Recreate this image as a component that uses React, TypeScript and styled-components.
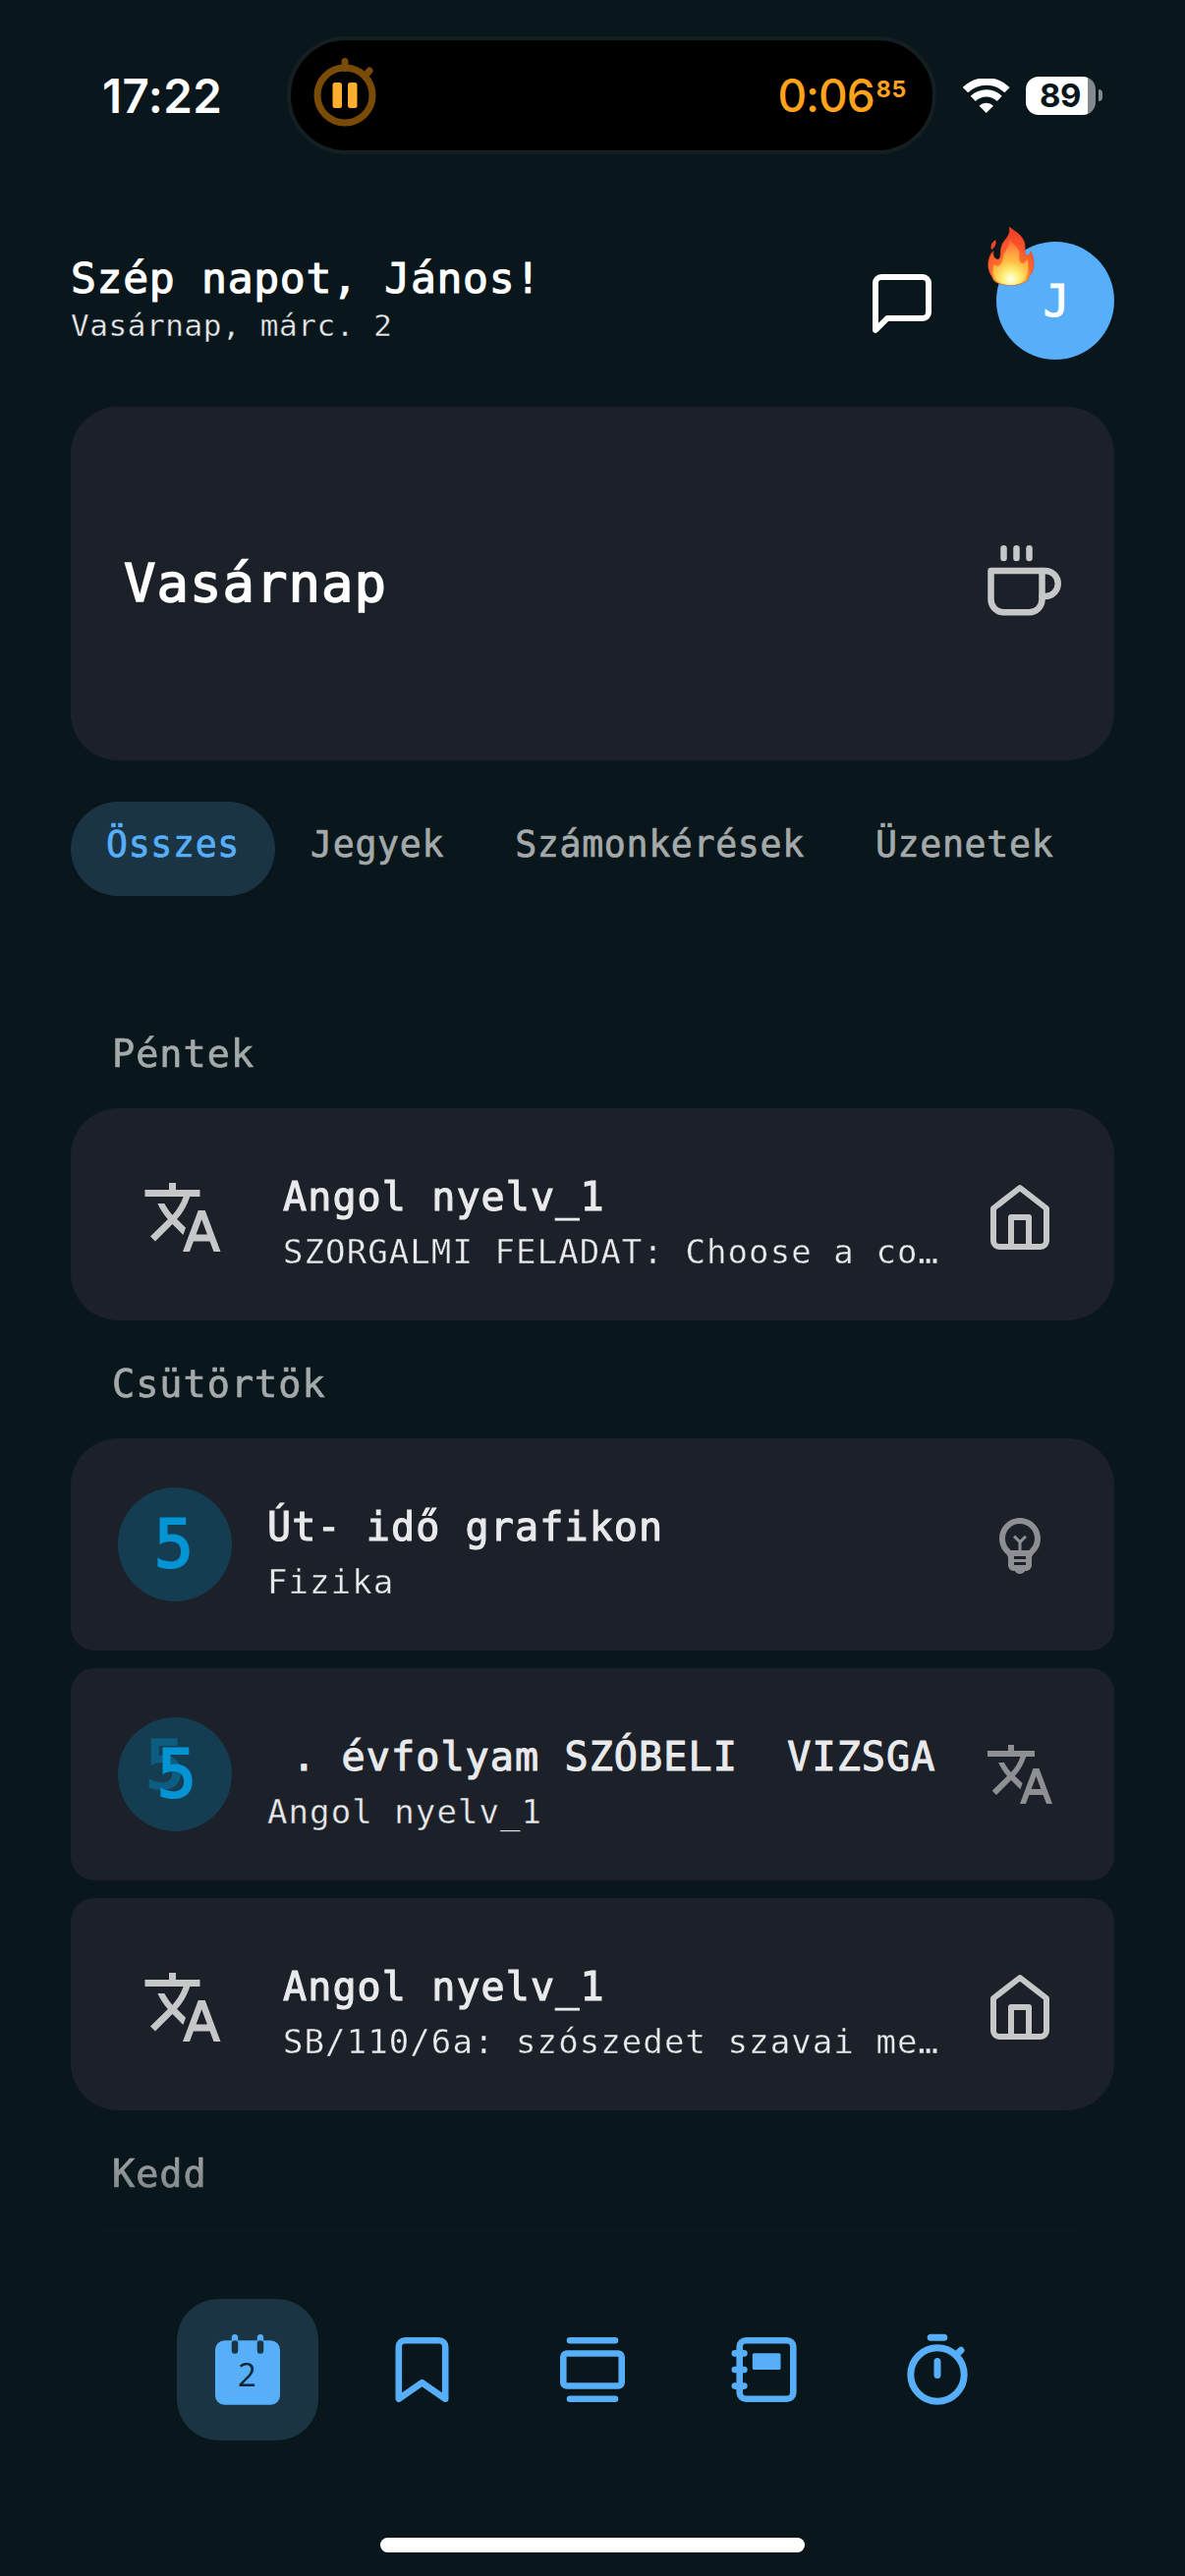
import React from "react";
import styled, { createGlobalStyle, css } from "styled-components";
import { FiCoffee, FiHome, FiMessageSquare } from "react-icons/fi";
import { MdOutlineEmojiObjects, MdTranslate } from "react-icons/md";

const color = {
  bg: "#09161b",
  card: "#1c2029",
  accent: "#56aff8",
  accentSoft: "#1a3444",
  text: "#ffffff",
  textDim: "#e9eaec",
  muted: "#a4a9aa",
  icon: "#c6c7c9",
  iconDim: "#8d8f93",
};

const mono = `"DejaVu Sans Mono", "Liberation Mono", monospace`;
const sans = `Inter, "Liberation Sans", sans-serif`;

const GlobalStyle = createGlobalStyle`
  * { box-sizing: border-box; }
  body { margin: 0; background: ${color.bg}; }
  svg { display: block; flex: none; }
`;

const medium = css`
  -webkit-text-stroke: 1.1px currentColor;
`;

/* A hairline in the surface colour slims the strokes to a light weight. */
const light = (surface: string) => css`
  -webkit-text-stroke: 0.35px ${surface};
`;

const Screen = styled.div`
  width: 1206px;
  height: 2622px;
  display: flex;
  flex-direction: column;
  overflow: hidden;
  background: ${color.bg};
  color: ${color.text};
  font-family: ${mono};
`;

/* ---------- status bar ---------- */

const StatusBar = styled.div`
  height: 194px;
  flex: none;
  display: flex;
  align-items: center;
  font-family: ${sans};
`;

const Clock = styled.div`
  width: 292px;
  padding: 1px 0 0 104px;
  font-size: 47.5px;
  font-weight: 600;
  line-height: 60px;
  letter-spacing: 0.4px;
`;

const Island = styled.div`
  width: 661px;
  height: 120px;
  padding: 0 26px 0 19px;
  display: flex;
  align-items: center;
  justify-content: space-between;
  background: #000;
  border: 4px solid #141f23;
  border-radius: 60px;
`;

const Timer = styled.div`
  display: flex;
  align-items: flex-start;
  color: #ffa31d;
  font-size: 46px;
  font-weight: 500;
  line-height: 56px;
  letter-spacing: -1px;
`;

const Hundredths = styled.span`
  padding-left: 2px;
  font-size: 23px;
  font-weight: 700;
  line-height: 44px;
  letter-spacing: 0.8px;
`;

const StatusIcons = styled.div`
  padding-left: 27px;
  display: flex;
  align-items: center;
  gap: 16px;
`;

const Battery = styled.div`
  display: flex;
  align-items: center;
  gap: 3px;
`;

const BatteryCell = styled.div`
  width: 71px;
  height: 39px;
  display: flex;
  align-items: center;
  justify-content: center;
  border-radius: 13px;
  background: linear-gradient(90deg, #fff 0 63px, #83898c 63px);
  color: ${color.bg};
  font-size: 33px;
  font-weight: 700;
  line-height: 39px;
  letter-spacing: -0.5px;
`;

const BatteryTip = styled.div`
  width: 4px;
  height: 12px;
  border-radius: 0 5px 5px 0;
  background: #83898c;
`;

/* ---------- header ---------- */

const Header = styled.header`
  margin: 52px 72px 0;
  height: 120px;
  flex: none;
  display: flex;
  align-items: center;
`;

const Greeting = styled.div`
  flex: 1;
  padding-top: 1px;
`;

const GreetingTitle = styled.div`
  font-size: 43px;
  line-height: 49px;
  letter-spacing: 0.72px;
  ${medium}
`;

const GreetingDate = styled.div`
  font-size: 31px;
  line-height: 47px;
  letter-spacing: 0.6px;
  color: ${color.textDim};
  ${light(color.bg)}
`;

const IconButton = styled.button`
  margin: 6px 60px 0 0;
  padding: 0;
  border: 0;
  background: none;
  color: ${color.text};
`;

const Avatar = styled.div`
  position: relative;
  width: 120px;
  height: 120px;
  padding: 2px 0 0 2px;
  display: flex;
  align-items: center;
  justify-content: center;
  border-radius: 50%;
  background: ${color.accent};
  font-size: 44px;
  line-height: 60px;
  ${medium}
`;

const Streak = styled.div`
  position: absolute;
  left: -11px;
  top: -18px;
`;

/* ---------- hero and tabs ---------- */

const Hero = styled.section`
  margin: 48px 72px 0;
  height: 360px;
  flex: none;
  padding: 0 54px;
  display: flex;
  align-items: center;
  justify-content: space-between;
  border-radius: 48px;
  background: ${color.card};
  color: ${color.icon};
`;

const HeroTitle = styled.div`
  font-size: 54px;
  line-height: 68px;
  letter-spacing: 1px;
  color: ${color.text};
  -webkit-text-stroke: 1.5px currentColor;
`;

const Tabs = styled.nav`
  margin: 42px 72px 96px;
  flex: none;
  display: flex;
`;

const Tab = styled.div<{ $active?: boolean }>`
  height: 96px;
  padding: 0 36px 9px;
  display: flex;
  align-items: center;
  border-radius: 48px;
  font-size: 36.5px;
  letter-spacing: 0.7px;
  background: ${(p) => (p.$active ? color.accentSoft : "transparent")};
  color: ${(p) => (p.$active ? color.accent : color.muted)};
  -webkit-text-stroke: 0.7px currentColor;
`;

/* ---------- feed ---------- */

const Feed = styled.main`
  flex: 1;
  min-height: 0;
  padding: 0 72px;
  overflow: hidden;
  mask-image: linear-gradient(#000 0 1175px, rgba(0, 0, 0, 0.78) 1222px, rgba(0, 0, 0, 0.2) 1260px, transparent 1284px);
`;

const DayLabel = styled.div`
  height: 120px;
  padding: 9px 0 0 42px;
  display: flex;
  align-items: center;
  font-size: 38.5px;
  letter-spacing: 1px;
  color: ${color.muted};
  -webkit-text-stroke: 0.7px currentColor;
`;

const Group = styled.div`
  display: flex;
  flex-direction: column;
  gap: 18px;
`;

const Card = styled.article`
  height: 216px;
  padding: 0 60px 0 48px;
  display: flex;
  align-items: center;
  border-radius: 24px;
  background: ${color.card};

  &:first-child {
    border-top-left-radius: 48px;
    border-top-right-radius: 48px;
  }
  &:last-child {
    border-bottom-left-radius: 48px;
    border-bottom-right-radius: 48px;
  }
`;

const SubjectIcon = styled.div`
  width: 132px;
  padding-top: 6px;
  display: flex;
  justify-content: center;
  color: ${color.icon};
`;

const GradeBadge = styled.div`
  position: relative;
  width: 116px;
  height: 116px;
  display: flex;
  align-items: center;
  justify-content: center;
  border-radius: 50%;
  background: #143d51;
`;

const GradeDigit = styled.span<{ $ghost?: boolean; $shift?: number }>`
  position: relative;
  left: ${(p) => p.$shift ?? 0}px;
  font-size: 67px;
  line-height: 84px;
  color: #0493d3;
  -webkit-text-stroke: 2px currentColor;

  ${(p) =>
    p.$ghost &&
    css`
      position: absolute;
      left: 28px;
      top: 7px;
      color: #0d5d82;
    `}
`;

const CardText = styled.div`
  flex: 1;
  min-width: 0;
  padding: 21px 0 0 36px;
  white-space: pre;
  color: ${color.textDim};
`;

const CardTitle = styled.div`
  font-size: 40px;
  line-height: 55px;
  letter-spacing: 1.12px;
  ${medium}
`;

const CardSubtitle = styled.div`
  font-size: 34px;
  line-height: 57px;
  letter-spacing: 1.08px;
  ${light(color.card)}
`;

const Trailing = styled.div<{ $dim?: boolean }>`
  padding-top: ${(p) => (p.$dim ? 0 : 6)}px;
  color: ${(p) => (p.$dim ? color.iconDim : color.icon)};
`;

/* ---------- bottom navigation ---------- */

const BottomNav = styled.nav`
  height: 144px;
  margin-top: 48px;
  flex: none;
  display: flex;
  justify-content: center;
  gap: 31.5px;
`;

const NavItem = styled.div<{ $active?: boolean }>`
  width: 144px;
  height: 144px;
  display: flex;
  align-items: center;
  justify-content: center;
  border-radius: 42px;
  background: ${(p) => (p.$active ? color.accentSoft : "transparent")};
  color: ${color.accent};
`;

const HomeIndicator = styled.div`
  width: 432px;
  height: 15px;
  margin: 99px auto 24px;
  flex: none;
  border-radius: 8px;
  background: #fff;
`;

/* ---------- drawings ---------- */

const StopwatchBadge = () => (
  <svg width="72" height="80" viewBox="315 57 72 80" fill="none" strokeLinecap="round" overflow="visible">
    <g stroke="#7a4b06">
      <circle cx="351" cy="97" r="28" strokeWidth="7" />
      <path d="M351 62.500v7M372.500 76l3.500-4" strokeWidth="7" />
    </g>
    <rect x="338.500" y="84" width="9.500" height="26" rx="2.500" fill="#ffae2f" />
    <rect x="354" y="84" width="9.500" height="26" rx="2.500" fill="#ffae2f" />
  </svg>
);

const WifiIcon = () => (
  <svg width="47.500" height="35" viewBox="0 0 49 36" fill="none">
    <path d="M2.600 12a31 31 0 0 1 43.800 0" stroke="#fff" strokeWidth="7.800" />
    <path d="M10.600 21a19.700 19.700 0 0 1 27.800 0" stroke="#fff" strokeWidth="7.400" />
    <path d="M24.500 36l-7.500-7.500a10.600 10.600 0 0 1 15 0z" fill="#fff" />
  </svg>
);

const Flame = () => (
  <svg width="53.300" height="66.700" viewBox="100 40 160 200">
    <defs>
      <radialGradient id="flame" gradientUnits="userSpaceOnUse" cx="177" cy="212" r="165">
        <stop offset="0" stopColor="#fffde0" />
        <stop offset="0.12" stopColor="#fff27a" />
        <stop offset="0.26" stopColor="#ffb93c" />
        <stop offset="0.4" stopColor="#fb6a2b" />
        <stop offset="0.7" stopColor="#f9502b" />
        <stop offset="1" stopColor="#e63a22" />
      </radialGradient>
      <radialGradient id="core" gradientUnits="userSpaceOnUse" cx="177" cy="208" r="110">
        <stop offset="0" stopColor="#fffff0" />
        <stop offset="0.22" stopColor="#fff17c" />
        <stop offset="0.5" stopColor="#ffbf43" />
        <stop offset="0.8" stopColor="#ff9440" />
        <stop offset="1" stopColor="#fb6f36" />
      </radialGradient>
    </defs>
    <path
      fill="url(#flame)"
      stroke="#ee4527"
      strokeWidth="2"
      d="M173 50C190 63 207 70 217 92C223 106 219 120 221 131C226 142 237 134 238 123C246 138 249 155 246 173C244 187 239 194 233 199L229 211C214 223 195 227 176 227C155 227 132 221 124 210L119 199C108 184 106 164 111 146C114 133 119 127 124 123C121 136 128 148 138 148C149 146 144 128 148 111C154 86 178 81 173 50Z"
    />
    <path fill="#ee4527" d="M131 89C121 94 113 105 118 119C127 113 134 104 131 89Z" />
    <path
      fill="url(#core)"
      d="M174 88C186 104 206 112 203 137C201 153 207 162 215 160C223 157 226 150 228 146C233 170 231 188 222 204C210 219 192 226 176 226C154 226 134 216 126 198C121 184 122 171 127 162C137 178 150 166 153 145C155 125 172 114 174 88Z"
    />
  </svg>
);

const navSvg = { width: 78, height: 78, viewBox: "-39 -39 78 78", fill: "none", stroke: "currentColor" } as const;

const CalendarIcon = () => (
  <svg {...navSvg} strokeWidth="6.500" strokeLinecap="round">
    <rect x="-33" y="-29.700" width="66" height="65.500" rx="9.500" fill="currentColor" stroke="none" />
    <path d="M-13-26.500v7M13-26.500v7" stroke={color.accentSoft} />
    <path d="M-16.200-29.700v-3a3.200 3.200 0 0 1 6.400 0v3zM9.800-29.700v-3a3.200 3.200 0 0 1 6.400 0v3z" fill="currentColor" stroke="none" />
    <text x="-0.500" y="17" textAnchor="middle" fontFamily="Open Sans, sans-serif" fontWeight="400" fontSize="33" fill="#0c2536" stroke="none">
      2
    </text>
  </svg>
);

const BookmarkIcon = () => (
  <svg {...navSvg} strokeWidth="6.600" strokeLinejoin="round">
    <path d="M25.200 29.700L1.500 13.200-22.200 29.700V-23.200a6.500 6.500 0 0 1 6.500-6.500h34.400a6.500 6.500 0 0 1 6.500 6.500z" />
  </svg>
);

const CarouselIcon = () => (
  <svg {...navSvg} strokeWidth="6.600" strokeLinecap="round">
    <rect x="-29.700" y="-16.500" width="59.400" height="33" rx="3.500" />
    <path d="M-23-29.700h46M-23 29.700h46" />
  </svg>
);

const NotebookIcon = () => (
  <svg {...navSvg} strokeWidth="6.600" strokeLinecap="round">
    <rect x="-26.300" y="-29.700" width="54.600" height="59.400" rx="6.500" />
    <path d="M-31.200-16.600h9.600M-31.200 0h9.600M-31.200 16.600h9.600" />
    <rect x="-13.200" y="-16.700" width="28.700" height="16.700" rx="1.500" fill="currentColor" stroke="none" />
  </svg>
);

const StopwatchIcon = () => (
  <svg {...navSvg} strokeWidth="7" strokeLinecap="round">
    <circle cx="0" cy="5" r="27.200" />
    <path d="M-6.800-32.700H6.800M0-8.500V5.500M20-16l4-3.700" />
  </svg>
);

/* ---------- data ---------- */

type Item = {
  title: string;
  subtitle: string;
  lead: "language" | "grade" | "gradeDouble";
  trail: "home" | "bulb" | "language";
};

const days: { label: string; items: Item[] }[] = [
  {
    label: "Péntek",
    items: [{ title: "Angol nyelv_1", subtitle: "SZORGALMI FELADAT: Choose a co…", lead: "language", trail: "home" }],
  },
  {
    label: "Csütörtök",
    items: [
      { title: "Út- idő grafikon", subtitle: "Fizika", lead: "grade", trail: "bulb" },
      { title: " . évfolyam SZÓBELI  VIZSGA", subtitle: "Angol nyelv_1", lead: "gradeDouble", trail: "language" },
      { title: "Angol nyelv_1", subtitle: "SB/110/6a: szószedet szavai me…", lead: "language", trail: "home" },
    ],
  },
];

const Lead = ({ kind }: { kind: Item["lead"] }) =>
  kind === "language" ? (
    <SubjectIcon>
      <MdTranslate size={84} />
    </SubjectIcon>
  ) : (
    <GradeBadge>
      {kind === "gradeDouble" && <GradeDigit $ghost>5</GradeDigit>}
      <GradeDigit $shift={kind === "gradeDouble" ? 2 : -1}>5</GradeDigit>
    </GradeBadge>
  );

const trailIcons = { home: FiHome, bulb: MdOutlineEmojiObjects, language: MdTranslate };

const FeedCard = ({ item }: { item: Item }) => {
  const TrailIcon = trailIcons[item.trail];
  return (
    <Card>
      <Lead kind={item.lead} />
      <CardText>
        <CardTitle>{item.title}</CardTitle>
        <CardSubtitle>{item.subtitle}</CardSubtitle>
      </CardText>
      <Trailing $dim={item.trail !== "home"}>
        <TrailIcon size={72} />
      </Trailing>
    </Card>
  );
};

export default function App() {
  return (
    <Screen>
      <GlobalStyle />
      <StatusBar>
        <Clock>17:22</Clock>
        <Island>
          <StopwatchBadge />
          <Timer>
            0:06<Hundredths>85</Hundredths>
          </Timer>
        </Island>
        <StatusIcons>
          <WifiIcon />
          <Battery>
            <BatteryCell>89</BatteryCell>
            <BatteryTip />
          </Battery>
        </StatusIcons>
      </StatusBar>

      <Header>
        <Greeting>
          <GreetingTitle>Szép napot, János!</GreetingTitle>
          <GreetingDate>Vasárnap, márc. 2</GreetingDate>
        </Greeting>
        <IconButton aria-label="Üzenetek">
          <FiMessageSquare size={72} />
        </IconButton>
        <Avatar>
          J
          <Streak>
            <Flame />
          </Streak>
        </Avatar>
      </Header>

      <Hero>
        <HeroTitle>Vasárnap</HeroTitle>
        <FiCoffee size={78} />
      </Hero>

      <Tabs>
        <Tab $active>Összes</Tab>
        <Tab>Jegyek</Tab>
        <Tab>Számonkérések</Tab>
        <Tab>Üzenetek</Tab>
      </Tabs>

      <Feed>
        {days.map((day) => (
          <section key={day.label}>
            <DayLabel>{day.label}</DayLabel>
            <Group>
              {day.items.map((item, i) => (
                <FeedCard key={i} item={item} />
              ))}
            </Group>
          </section>
        ))}
        <DayLabel>Kedd</DayLabel>
        <Group>
          <Card />
        </Group>
      </Feed>

      <BottomNav>
        <NavItem $active>
          <CalendarIcon />
        </NavItem>
        <NavItem>
          <BookmarkIcon />
        </NavItem>
        <NavItem>
          <CarouselIcon />
        </NavItem>
        <NavItem>
          <NotebookIcon />
        </NavItem>
        <NavItem>
          <StopwatchIcon />
        </NavItem>
      </BottomNav>
      <HomeIndicator />
    </Screen>
  );
}
